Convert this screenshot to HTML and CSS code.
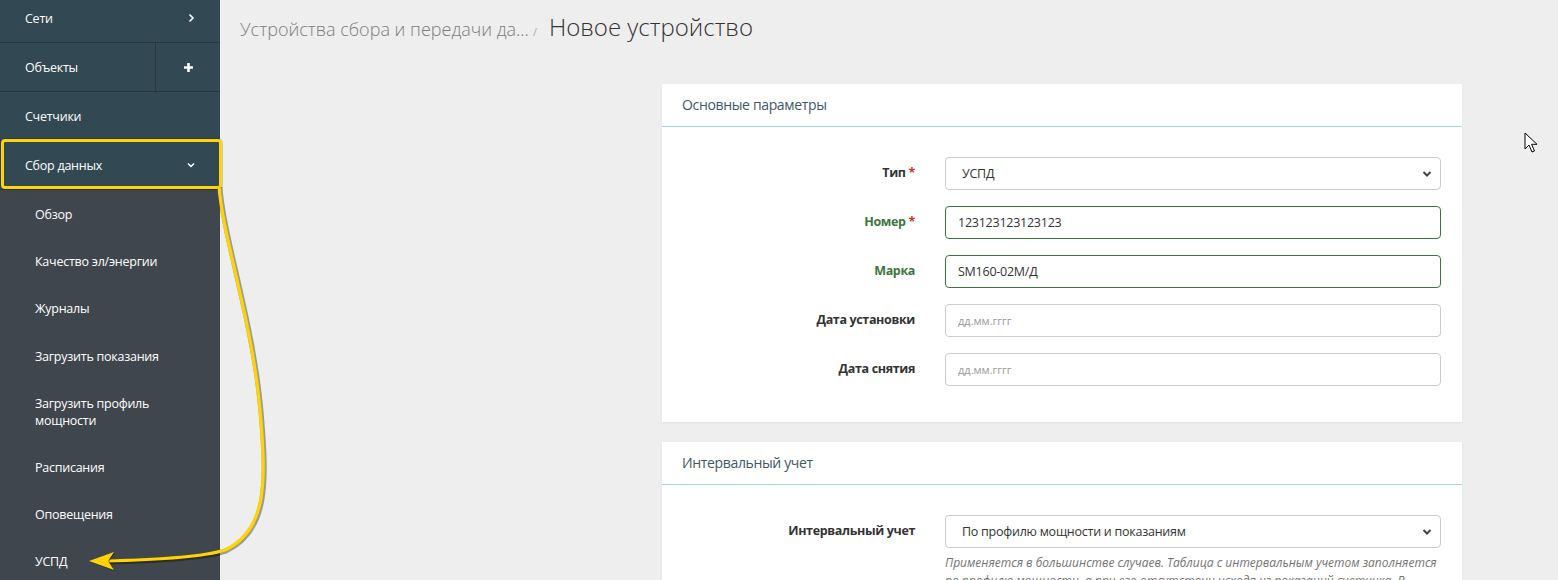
FILE: index.html
```html
<!DOCTYPE html>
<html lang="ru">
<head>
<meta charset="utf-8">
<title>Новое устройство</title>
<link rel="stylesheet" href="styles.css">
</head>
<body>
<div class="app">
  <nav class="sidebar">
    <div class="menu-top">
      <div class="mi"><span>Сети</span><svg class="ico" width="10" height="10" viewBox="0 0 10 10"><path d="M3.5 1.5 L7 5 L3.5 8.5" fill="none" stroke="#fff" stroke-width="1.6"/></svg></div>
      <div class="mi split"><span class="mi-label">Объекты</span><span class="mi-add"><svg width="11" height="11" viewBox="0 0 11 11"><path d="M5.5 1 V10 M1 5.5 H10" stroke="#fff" stroke-width="2.6"/></svg></span></div>
      <div class="mi"><span>Счетчики</span></div>
      <div class="mi"><span>Сбор данных</span><svg class="ico" width="10" height="10" viewBox="0 0 10 10"><path d="M2 3.5 L5 6.5 L8 3.5" fill="none" stroke="#fff" stroke-width="1.5"/></svg></div>
    </div>
    <ul class="submenu">
      <li>Обзор</li>
      <li>Качество эл/энергии</li>
      <li>Журналы</li>
      <li>Загрузить показания</li>
      <li>Загрузить профиль<br>мощности</li>
      <li>Расписания</li>
      <li>Оповещения</li>
      <li>УСПД</li>
    </ul>
  </nav>
  <main class="main">
    <div class="crumbs">
      <span class="crumb-link">Устройства сбора и передачи да...</span>
      <span class="crumb-sep">/</span>
      <h1 class="crumb-title">Новое устройство</h1>
    </div>

    <section class="card">
      <div class="card-head">Основные параметры</div>
      <div class="card-body">
        <div class="row">
          <label class="lbl">Тип <span class="req">*</span></label>
          <div class="ctl select"><span>УСПД</span><svg width="10" height="10" viewBox="0 0 10 10"><path d="M1.5 3 L5 6.5 L8.5 3" fill="none" stroke="#444" stroke-width="2"/></svg></div>
        </div>
        <div class="row ok">
          <label class="lbl">Номер <span class="req">*</span></label>
          <div class="ctl">123123123123123</div>
        </div>
        <div class="row ok">
          <label class="lbl">Марка</label>
          <div class="ctl">SM160-02M/Д</div>
        </div>
        <div class="row">
          <label class="lbl">Дата установки</label>
          <div class="ctl ph">дд.мм.гггг</div>
        </div>
        <div class="row">
          <label class="lbl">Дата снятия</label>
          <div class="ctl ph">дд.мм.гггг</div>
        </div>
      </div>
    </section>

    <section class="card">
      <div class="card-head">Интервальный учет</div>
      <div class="card-body">
        <div class="row">
          <label class="lbl">Интервальный учет</label>
          <div class="ctl-wrap">
            <div class="ctl select"><span>По профилю мощности и показаниям</span><svg width="10" height="10" viewBox="0 0 10 10"><path d="M1.5 3 L5 6.5 L8.5 3" fill="none" stroke="#444" stroke-width="2"/></svg></div>
            <p class="help">Применяется в большинстве случаев. Таблица с интервальным учетом заполняется по профилю мощности, а при его отсутствии исходя из показаний счетчика. В</p>
          </div>
        </div>
      </div>
    </section>
  </main>
</div>

<div class="highlight"></div>
<svg class="annot" width="300" height="580" viewBox="0 0 300 580">
  <path d="M219 186 C222 235 252 320 260 410 C266 480 268 530 225 550 C200 558 150 560 104 561" fill="none" stroke="rgba(0,0,0,0.35)" stroke-width="5" transform="translate(1 1)"/>
  <path d="M219 186 C222 235 252 320 260 410 C266 480 268 530 225 550 C200 558 150 560 104 561" fill="none" stroke="#ffd400" stroke-width="3.2"/>
  <path d="M89 561 L114 552 L108 561 L114 570 Z" fill="rgba(0,0,0,0.35)" transform="translate(1 1)"/>
  <path d="M89 561 L114 552 L108 561 L114 570 Z" fill="#ffd400"/>
</svg>
<svg class="cursor" width="14" height="22" viewBox="0 0 14 22">
  <path d="M1 1 L1 17 L5 13 L8 20 L10.5 19 L7.6 12.3 L13 12.3 Z" fill="#fff" stroke="#000" stroke-width="1" stroke-linejoin="round"/>
</svg>
</body>
</html>
```

FILE: styles.css
```css
* { box-sizing: border-box; }
html, body { margin: 0; padding: 0; }
body {
  width: 1558px;
  height: 580px;
  overflow: hidden;
  background: #eeeeee;
  font-family: "Open Sans", "Liberation Sans", sans-serif;
  font-size: 13px;
  color: #333;
  position: relative;
}
.app { display: flex; align-items: flex-start; height: 580px; }

/* sidebar */
.sidebar {
  width: 220px;
  flex: none;
  margin-top: -6px;
  background: #40464d;
  height: 600px;
  color: #fff;
}
.menu-top { background: #324852; }
.mi {
  height: 49px;
  border-bottom: 1px solid #26373e;
  display: flex;
  align-items: center;
  justify-content: space-between;
  padding: 0 25px 0 25px;
  font-size: 12.5px;
  letter-spacing: -0.25px;
}
.mi .ico { margin-right: -1px; }
.mi.split { padding-right: 0; }
.mi-label { flex: 1; }
.mi-add {
  width: 65px;
  height: 48px;
  border-left: 1px solid #26373e;
  display: flex;
  align-items: center;
  justify-content: center;
}
.submenu {
  list-style: none;
  margin: 0;
  padding: 1px 0 0;
}
.submenu li {
  padding: 15px 20px 15px 35px;
  line-height: 17px;
  font-size: 12.5px;
  letter-spacing: -0.25px;
}
.submenu li + li { margin-top: 0.2px; }

/* main */
.main { flex: 1; padding: 0 20px; }
.crumbs {
  display: flex;
  align-items: baseline;
  height: 84px;
  padding-top: 13px;
}
.crumb-link { font-size: 18px; font-weight: 300; color: #7d7d7d; }
.crumb-sep { font-size: 11px; color: #aaa; margin: 0 12px 0 4px; }
.crumb-title { margin: 0; font-size: 24px; font-weight: 300; color: #333; line-height: 1.2; }

.card {
  width: 800px;
  margin-left: 422px;
  margin-bottom: 20px;
  background: #fff;
  box-shadow: 0 1px 2px rgba(0,0,0,0.06);
}
.card-head {
  height: 43px;
  line-height: 41px;
  padding: 0 20px;
  font-size: 14px;
  letter-spacing: -0.35px;
  color: #3e5866;
  border-bottom: 1px solid #a9d3e0;
}
.card-body { padding: 30px 21px 36px 20px; }
.row {
  display: grid;
  grid-template-columns: 1fr 496px;
  column-gap: 30px;
  margin-bottom: 16px;
}
.row:last-child { margin-bottom: 0; }
.lbl {
  text-align: right;
  font-weight: 700;
  font-size: 12.5px;
  letter-spacing: -0.35px;
  line-height: 18px;
  padding-top: 7px;
  color: #333;
}
.req { color: #c0392b; }
.row.ok .lbl { color: #3c763d; }
.ctl {
  height: 33px;
  border: 1px solid #cccccc;
  border-radius: 4px;
  padding: 0 12px;
  display: flex;
  align-items: center;
  justify-content: space-between;
  font-size: 12.5px;
  letter-spacing: -0.25px;
  color: #333;
}
.row.ok .ctl { border-color: #3c763d; }
.ctl.ph { font-size: 11px; letter-spacing: 0; color: #999; }
.ctl.select { padding-right: 8px; padding-left: 16px; }
.help {
  margin: 6px 0 0;
  font-size: 12px;
  font-style: italic;
  color: #737373;
  line-height: 18px;
}

/* annotation overlays */
.highlight {
  position: absolute;
  left: 1px;
  top: 139px;
  width: 221px;
  height: 50px;
  border: 3px solid #ffd400;
  border-radius: 4px;
  box-shadow: 0 0 0 1px rgba(0,0,0,0.15);
}
.annot { position: absolute; left: 0; top: 0; pointer-events: none; }
.cursor { position: absolute; left: 1524px; top: 132px; }
```
